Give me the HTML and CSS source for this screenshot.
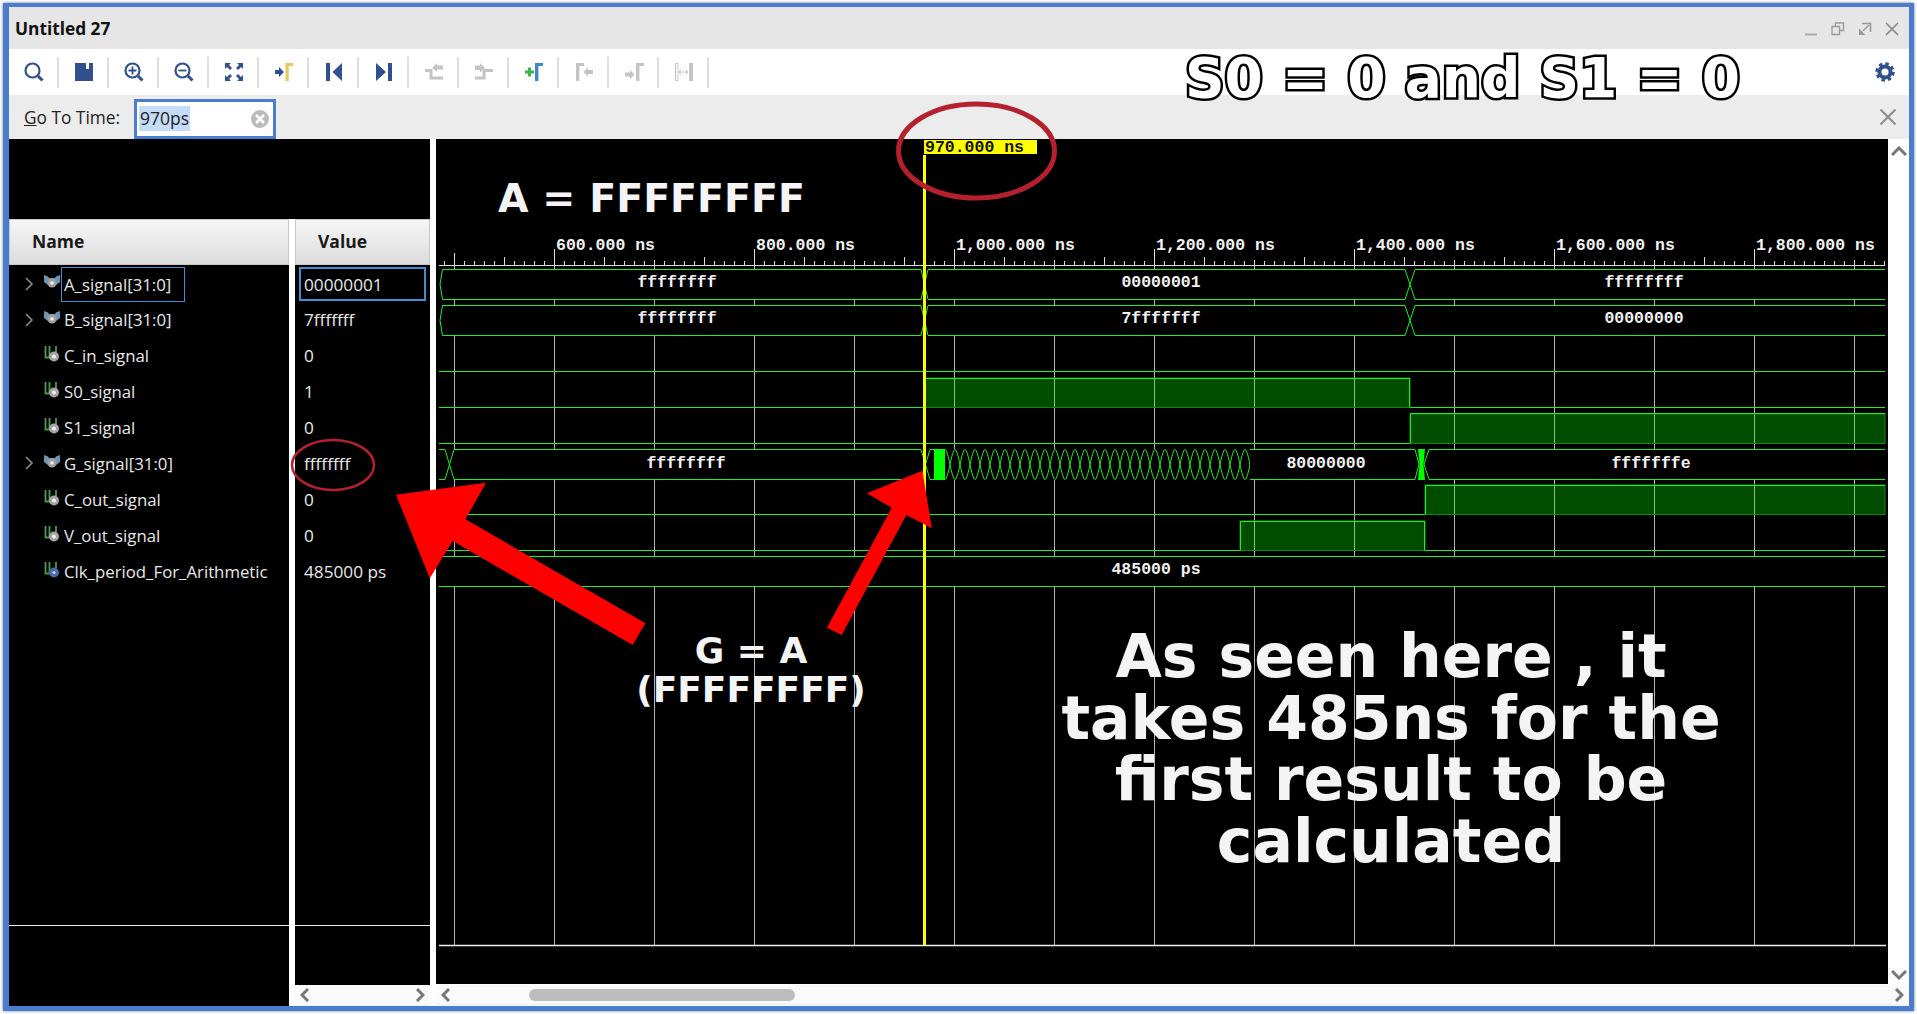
FILE: index.html
```html
<!DOCTYPE html>
<html lang="en">
<head>
    <meta charset="UTF-8">
    <title>Untitled 27</title>
    <link rel="stylesheet" href="styles.css">
</head>
<body>

<svg class="defs" width="0" height="0">
    <symbol id="bus-icon" viewBox="0 0 16 14">
        <path d="M0 0 L4 1.500 L5 3 H11 L12 1.500 L16 0 V7 L12 10 H4 L0 7 Z" fill="#6f93b3"/>
        <circle cx="8" cy="8" r="4.500" fill="#a0a0a0"/>
        <circle cx="8" cy="8" r="1.800" fill="#eee"/>
    </symbol>
    <symbol id="wire-icon" viewBox="0 0 16 16">
        <path d="M1.500 0 V11.500 H5.500 M5.500 11.500 V0 M12 0 V6" fill="none" stroke="#4a9a4a" stroke-width="1.800"/>
        <circle cx="10" cy="10.500" r="5" fill="#a5a5a5"/>
        <circle cx="10" cy="10.500" r="2" fill="#eee"/>
    </symbol>
    <symbol id="clk-icon" viewBox="0 0 16 16">
        <path d="M1.500 0 V11.500 H5.500 M5.500 11.500 V0 M12 0 V6" fill="none" stroke="#4a9a4a" stroke-width="1.800"/>
        <circle cx="10" cy="10.500" r="5" fill="#4c6aa8"/>
        <circle cx="10" cy="10.500" r="1.500" fill="#cdd8ee"/>
    </symbol>
    <symbol id="gamma-icon" viewBox="0 0 8 18">
        <path d="M0 0 H8 V3 H3.400 V18 H0 Z"/>
    </symbol>
    <symbol id="expander-icon" viewBox="0 0 10 14">
        <path d="M2 1 L8 7 L2 13" fill="none" stroke="#8a8a8a" stroke-width="1.600"/>
    </symbol>
    <symbol id="chevron-left" viewBox="0 0 10 14">
        <path d="M8 1 L2 7 L8 13" fill="none" stroke="#777" stroke-width="3"/>
    </symbol>
    <symbol id="chevron-right" viewBox="0 0 10 14">
        <path d="M2 1 L8 7 L2 13" fill="none" stroke="#777" stroke-width="3"/>
    </symbol>
    <symbol id="chevron-up" viewBox="0 0 16 10">
        <path d="M1 9 L8 2 L15 9" fill="none" stroke="#777" stroke-width="3"/>
    </symbol>
    <symbol id="chevron-down" viewBox="0 0 16 10">
        <path d="M1 1 L8 8 L15 1" fill="none" stroke="#777" stroke-width="3"/>
    </symbol>
</svg>

<div class="window">
    <div class="titlebar">
        <span class="title">Untitled 27</span>
        <div class="window-controls">
            <svg class="control" width="14" height="14" viewBox="0 0 14 14"><path d="M1 12.500 H13" stroke="#aaa" stroke-width="2"/></svg>
            <svg class="control" width="14" height="14" viewBox="0 0 14 14"><path d="M4.500 4 V1 H12.500 V8.500 H9 M1 4.500 H8.500 V12.500 H1 Z" fill="none" stroke="#999" stroke-width="1.300"/></svg>
            <svg class="control" width="14" height="14" viewBox="0 0 14 14"><path d="M4 1.500 H12.500 V10" fill="none" stroke="#999" stroke-width="1.500"/><path d="M1 13 V6.500 L7.500 13 Z" fill="#999"/><path d="M5 9 L11 3" stroke="#999" stroke-width="1.500"/></svg>
            <svg class="control" width="14" height="14" viewBox="0 0 14 14"><path d="M1 1 L13 13 M13 1 L1 13" stroke="#888" stroke-width="1.700"/></svg>
        </div>
    </div>

    <div class="toolbar">
        <div class="tool"><svg width="24" height="24" viewBox="0 0 24 24"><circle cx="10.500" cy="10.500" r="7" fill="none" stroke="#30508e" stroke-width="2.200"/><path d="M16 16 L20.500 20.500" stroke="#30508e" stroke-width="3"/></svg></div>
        <div class="tool"><svg width="24" height="24" viewBox="0 0 24 24"><path d="M3 3 H21 V21 H3 Z" fill="#30508e"/><path d="M14 3 H17 V9 H14 Z" fill="#fff"/></svg></div>
        <div class="tool"><svg width="24" height="24" viewBox="0 0 24 24"><circle cx="10.500" cy="10.500" r="7" fill="none" stroke="#30508e" stroke-width="2.200"/><path d="M16 16 L20.500 20.500" stroke="#30508e" stroke-width="3"/><path d="M6.500 10.500 H14.500 M10.500 6.500 V14.500" stroke="#30508e" stroke-width="1.800"/></svg></div>
        <div class="tool"><svg width="24" height="24" viewBox="0 0 24 24"><circle cx="10.500" cy="10.500" r="7" fill="none" stroke="#30508e" stroke-width="2.200"/><path d="M16 16 L20.500 20.500" stroke="#30508e" stroke-width="3"/><path d="M6.500 10.500 H14.500" stroke="#30508e" stroke-width="1.800"/></svg></div>
        <div class="tool"><svg width="24" height="24" viewBox="0 0 24 24" fill="#30508e"><path d="M3 3 H9 L7 5 L10 8 L8 10 L5 7 L3 9 Z M21 3 V9 L19 7 L16 10 L14 8 L17 5 L15 3 Z M3 21 V15 L5 17 L8 14 L10 16 L7 19 L9 21 Z M21 21 H15 L17 19 L14 16 L16 14 L19 17 L21 15 Z"/></svg></div>
        <div class="tool"><svg width="24" height="24" viewBox="0 0 24 24"><path d="M3 10 H7 V7 L12 12 L7 17 V14 H3 Z" fill="#30508e"/><use href="#gamma-icon" x="13.300" y="3" width="8" height="18" fill="#e8c860"/></svg></div>
        <div class="tool"><svg width="24" height="24" viewBox="0 0 24 24" fill="#30508e"><path d="M4 3 H8 V21 H4 Z M20 3 V21 L10.500 12 Z"/></svg></div>
        <div class="tool"><svg width="24" height="24" viewBox="0 0 24 24" fill="#30508e"><path d="M4 3 V21 L14 12 Z M16 3 H20 V21 H16 Z"/></svg></div>
        <div class="tool"><svg width="24" height="24" viewBox="0 0 24 24"><path d="M3 10.500 H9 V18 H21" fill="none" stroke="#c4c4c4" stroke-width="3"/><path d="M21 5.500 H15 V3 L10 8 L15 12 V9.500 H21 Z" fill="#c4c4c4"/></svg></div>
        <div class="tool"><svg width="24" height="24" viewBox="0 0 24 24"><path d="M3 18 H12 V10.500 H21" fill="none" stroke="#c4c4c4" stroke-width="3"/><path d="M3 5.500 H8 V3 L13 8 L8 12.500 V10 H3 Z" fill="#c4c4c4"/></svg></div>
        <div class="tool"><svg width="24" height="24" viewBox="0 0 24 24"><path d="M3 12 H12 M7.500 7.500 V16.500" stroke="#3ab54a" stroke-width="3"/><use href="#gamma-icon" x="13" y="3" width="8" height="18" fill="#3a8ac4"/></svg></div>
        <div class="tool"><svg width="24" height="24" viewBox="0 0 24 24"><use href="#gamma-icon" x="4" y="3" width="8" height="18" fill="#c4c4c4"/><path d="M21 10 H16 V7.500 L11.500 12 L16 16.500 V14 H21 Z" fill="#c4c4c4"/></svg></div>
        <div class="tool"><svg width="24" height="24" viewBox="0 0 24 24"><path d="M3 12.500 H8 V10 L12.500 14.500 L8 19 V16.500 H3 Z" fill="#c4c4c4"/><use href="#gamma-icon" x="14" y="3" width="8" height="18" fill="#c4c4c4"/></svg></div>
        <div class="tool"><svg width="24" height="24" viewBox="0 0 24 24"><path d="M3.500 3.500 H6 V20.500 H3.500 Z" fill="none" stroke="#c4c4c4"/><path d="M17 3 H21 V21 H17 Z" fill="#c4c4c4"/><path d="M7 12 H16 M9 10 L7 12 L9 14 M14 10 L16 12 L14 14" fill="none" stroke="#c4c4c4"/></svg></div>
        <svg class="gear" width="24" height="24" viewBox="0 0 24 24">
            <circle cx="12" cy="12" r="8" fill="none" stroke="#30508e" stroke-width="3.400" stroke-dasharray="3.300 3"/>
            <circle cx="12" cy="12" r="5.600" fill="none" stroke="#30508e" stroke-width="4"/>
        </svg>
    </div>

    <div class="gotobar">
        <label class="goto-label"><u>G</u>o To Time:</label>
        <div class="goto-input">
            <span class="selected">970ps</span>
            <svg class="clear" width="20" height="20" viewBox="0 0 20 20"><circle cx="10" cy="10" r="9" fill="#bbb"/><path d="M6 6 L14 14 M14 6 L6 14" stroke="#fff" stroke-width="2.500"/></svg>
        </div>
        <svg class="goto-close" width="18" height="18" viewBox="0 0 18 18"><path d="M1.500 1.500 L16.500 16.500 M16.500 1.500 L1.500 16.500" stroke="#8c8c8c" stroke-width="2"/></svg>
    </div>

    <div class="panes">
        <div class="signals">
            <div class="signals-top"></div>
            <div class="columns">
                <div class="col col-name">
                    <div class="col-head head-name">Name</div>
                    <div class="rows">
                        <div class="row"><svg class="expander" width="10" height="14"><use href="#expander-icon"/></svg><svg class="sig-icon" width="16" height="14"><use href="#bus-icon"/></svg><span class="sig-name focused">A_signal[31:0]</span></div>
                        <div class="row"><svg class="expander" width="10" height="14"><use href="#expander-icon"/></svg><svg class="sig-icon" width="16" height="14"><use href="#bus-icon"/></svg><span class="sig-name">B_signal[31:0]</span></div>
                        <div class="row leaf"><svg class="sig-icon" width="16" height="16"><use href="#wire-icon"/></svg><span class="sig-name">C_in_signal</span></div>
                        <div class="row leaf"><svg class="sig-icon" width="16" height="16"><use href="#wire-icon"/></svg><span class="sig-name">S0_signal</span></div>
                        <div class="row leaf"><svg class="sig-icon" width="16" height="16"><use href="#wire-icon"/></svg><span class="sig-name">S1_signal</span></div>
                        <div class="row"><svg class="expander" width="10" height="14"><use href="#expander-icon"/></svg><svg class="sig-icon" width="16" height="14"><use href="#bus-icon"/></svg><span class="sig-name">G_signal[31:0]</span></div>
                        <div class="row leaf"><svg class="sig-icon" width="16" height="16"><use href="#wire-icon"/></svg><span class="sig-name">C_out_signal</span></div>
                        <div class="row leaf"><svg class="sig-icon" width="16" height="16"><use href="#wire-icon"/></svg><span class="sig-name">V_out_signal</span></div>
                        <div class="row leaf"><svg class="sig-icon" width="16" height="16"><use href="#clk-icon"/></svg><span class="sig-name">Clk_period_For_Arithmetic</span></div>
                    </div>
                    <div class="foot foot-name"></div>
                </div>
                <div class="col col-value">
                    <div class="col-head head-value">Value</div>
                    <div class="rows">
                        <div class="row value"><span class="value-box">00000001</span></div>
                        <div class="row value">7fffffff</div>
                        <div class="row value">0</div>
                        <div class="row value">1</div>
                        <div class="row value">0</div>
                        <div class="row value">ffffffff</div>
                        <div class="row value">0</div>
                        <div class="row value">0</div>
                        <div class="row value">485000 ps</div>
                    </div>
                    <div class="foot foot-value"></div>
                    <div class="hscroll">
                        <svg width="10" height="14"><use href="#chevron-left"/></svg>
                        <svg width="10" height="14"><use href="#chevron-right"/></svg>
                    </div>
                </div>
            </div>
        </div>

        <div class="waves">
            <div class="waves-main">
                <svg class="canvas" width="1452" height="845" viewBox="436 139 1452 845">
                    <defs>
                        <pattern id="minor-ticks" patternUnits="userSpaceOnUse" x="444" y="261" width="10" height="4">
                            <path d="M0.500 0 V4" stroke="#ddd"/>
                        </pattern>
                        <pattern id="toggling" patternUnits="userSpaceOnUse" x="945" y="449" width="20" height="31">
                            <path d="M0 0.500 C1.500 0.500 3.500 8 5 15.500 C6.500 23 8.500 30.500 10 30.500 C11.500 30.500 13.500 23 15 15.500 C16.500 8 18.500 0.500 20 0.500" fill="none" stroke="#20f020"/>
                            <path d="M0 30.500 C1.500 30.500 3.500 23 5 15.500 C6.500 8 8.500 0.500 10 0.500 C11.500 0.500 13.500 8 15 15.500 C16.500 23 18.500 30.500 20 30.500" fill="none" stroke="#20f020"/>
                        </pattern>
                    </defs>

                    <!-- ruler -->
                    <text class="ruler-label" x="556" y="250">600.000 ns</text>
                    <text class="ruler-label" x="756" y="250">800.000 ns</text>
                    <text class="ruler-label" x="956" y="250">1,000.000 ns</text>
                    <text class="ruler-label" x="1156" y="250">1,200.000 ns</text>
                    <text class="ruler-label" x="1356" y="250">1,400.000 ns</text>
                    <text class="ruler-label" x="1556" y="250">1,600.000 ns</text>
                    <text class="ruler-label" x="1756" y="250">1,800.000 ns</text>
                    <rect x="439" y="261" width="1446" height="4" fill="url(#minor-ticks)"/>
                    <path class="tick" d="M454.500 253 V265 M554.500 249 V265 M754.500 249 V265 M954.500 249 V265 M1154.500 249 V265 M1354.500 249 V265 M1554.500 249 V265 M1754.500 249 V265 M504.500 257 V265 M604.500 257 V265 M704.500 257 V265 M804.500 257 V265 M904.500 257 V265 M1004.500 257 V265 M1104.500 257 V265 M1204.500 257 V265 M1304.500 257 V265 M1404.500 257 V265 M1504.500 257 V265 M1704.500 257 V265 M654.500 260 V265 M854.500 260 V265 M1054.500 260 V265 M1254.500 260 V265 M1454.500 260 V265 M1654.500 260 V265 M1854.500 260 V265"/>
                    <path class="tick" d="M439 265.500 H1885"/>

                    <!-- grid -->
                    <path class="grid" d="M454.500 266 V945 M554.500 266 V945 M654.500 266 V945 M754.500 266 V945 M854.500 266 V945 M954.500 266 V945 M1054.500 266 V945 M1154.500 266 V945 M1254.500 266 V945 M1354.500 266 V945 M1454.500 266 V945 M1554.500 266 V945 M1654.500 266 V945 M1754.500 266 V945 M1854.500 266 V945"/>
                    <path class="bottom-line" d="M439 945.500 H1886"/>

                    <!-- A_signal -->
                    <g class="trace">
                        <rect class="bus-bg" x="439" y="269" width="1446" height="31"/>
                        <path d="M440 284.500 L442.500 269.500 H921 L924.500 284.500 L921 299.500 H442.500 Z"/>
                        <path d="M924.500 284.500 L928 269.500 H1405 L1410 284.500 L1405 299.500 H928 Z"/>
                        <path d="M1410 284.500 L1415 269.500 H1885 M1885 299.500 H1415 L1410 284.500"/>
                    </g>
                    <text class="bus-label" x="677" y="287">ffffffff</text>
                    <text class="bus-label" x="1161" y="287">00000001</text>
                    <text class="bus-label" x="1644" y="287">ffffffff</text>

                    <!-- B_signal -->
                    <g class="trace">
                        <rect class="bus-bg" x="439" y="305" width="1446" height="31"/>
                        <path d="M440 320.500 L442.500 305.500 H921 L924.500 320.500 L921 335.500 H442.500 Z"/>
                        <path d="M924.500 320.500 L928 305.500 H1405 L1410 320.500 L1405 335.500 H928 Z"/>
                        <path d="M1410 320.500 L1415 305.500 H1885 M1885 335.500 H1415 L1410 320.500"/>
                    </g>
                    <text class="bus-label" x="677" y="323">ffffffff</text>
                    <text class="bus-label" x="1161" y="323">7fffffff</text>
                    <text class="bus-label" x="1644" y="323">00000000</text>

                    <!-- single bit traces -->
                    <g class="trace">
                        <path d="M439 371.500 H1885 M439 407.500 H1885 M439 443.500 H1885 M439 514.500 H1885 M439 550.500 H1885"/>
                    </g>
                    <rect class="high" x="925" y="378" width="485" height="29.500"/>
                    <rect class="high" x="1410" y="414" width="475" height="29.500"/>
                    <rect class="high" x="1425" y="485" width="460" height="29.500"/>
                    <rect class="high" x="1240" y="521" width="185" height="29.500"/>
                    <g class="trace">
                        <path d="M925 378.500 H1409.500 V407.500 M1410.500 443.500 V413.500 H1885 M1425.500 514.500 V485.500 H1885 M1240.500 550.500 V521.500 H1424.500 V550.500"/>
                    </g>

                    <!-- G_signal -->
                    <rect class="bus-bg" x="439" y="449" width="1446" height="31"/>
                    <g class="trace">
                        <path d="M439 449.500 H445 L454 479.500 H921 L930 449.500 H934 M439 479.500 H445 L454 449.500 H921 L930 479.500 H934"/>
                        <path d="M1250 449.500 H1415 L1419 464 M1250 479.500 H1415 L1419 464"/>
                        <path d="M1424 464 L1429 449.500 H1885 M1424 464 L1429 479.500 H1885"/>
                    </g>
                    <rect x="945" y="449" width="305" height="31" fill="url(#toggling)"/>
                    <path class="solid" d="M934 449 H945 V480 H934 Z M1418 449 H1425 L1423.500 464.500 L1425 480 H1418 L1419.500 464.500 Z"/>
                    <text class="bus-label" x="686" y="468">ffffffff</text>
                    <text class="bus-label" x="1326" y="468">80000000</text>
                    <text class="bus-label" x="1651" y="468">fffffffe</text>

                    <!-- Clk_period -->
                    <rect class="bus-bg" x="439" y="556" width="1446" height="31"/>
                    <g class="trace">
                        <path d="M439 556.500 H1885 M439 586.500 H1885"/>
                    </g>
                    <text class="bus-label" x="1156" y="574">485000 ps</text>

                    <!-- cursor -->
                    <rect class="cursor" x="923" y="155" width="3" height="790"/>
                    <rect class="cursor" x="924" y="140" width="113" height="14"/>
                    <text class="cursor-label" x="925" y="152">970.000 ns</text>
                </svg>
                <div class="vscroll">
                    <svg width="16" height="10"><use href="#chevron-up"/></svg>
                    <svg width="16" height="10"><use href="#chevron-down"/></svg>
                </div>
            </div>
            <div class="hscroll wave-hscroll">
                <svg width="10" height="14"><use href="#chevron-left"/></svg>
                <div class="thumb"></div>
                <svg width="10" height="14"><use href="#chevron-right"/></svg>
            </div>
        </div>
    </div>
</div>

<!-- notes drawn over the screenshot -->
<svg class="notes" width="1917" height="1014" viewBox="0 0 1917 1014">
    <ellipse class="ring ring-big" cx="976.500" cy="151" rx="78" ry="47"/>
    <ellipse class="ring ring-small" cx="333" cy="465" rx="41" ry="25"/>
    <path class="arrow" d="M396 494.700 L486 482.700 L465.400 519.300 L645.400 623.300 L632.600 645 L452.700 541 L429.800 578.300 Z"/>
    <path class="arrow" d="M922.400 470.700 L931.800 528.300 L906.400 515 L841.600 635 L827 627.700 L891.800 507.700 L867 493.300 Z"/>
    <text class="note-title" x="1185" y="97">S0 = 0 and S1 = 0</text>
    <text class="note-a" x="498" y="212">A = FFFFFFFF</text>
</svg>
<div class="note-g">G = A<br>(FFFFFFFF)</div>
<div class="note-big">As seen here , it<br>takes 485ns for the<br>first result to be<br>calculated</div>

</body>
</html>
```

FILE: styles.css
```css
html, body {
    margin: 0;
    padding: 0;
    height: 100%;
    overflow: hidden;
}
body {
    background: #fff;
    font-family: "Open Sans", "Noto Sans", sans-serif;
    position: relative;
}
.defs {
    position: absolute;
}
.window {
    box-sizing: border-box;
    display: flex;
    flex-direction: column;
    width: 1911px;
    height: 1008px;
    margin: 3px 3px 0 3px;
    background: #fff;
    border-style: solid;
    border-color: #4a7dcf;
    border-width: 4px 5px 5px 6px;
    box-shadow: 0 0 3px #777;
}

.titlebar {
    display: flex;
    flex: none;
    align-items: center;
    justify-content: space-between;
    height: 42px;
    background: #e6e6e6;
}
.title {
    margin-left: 6px;
    font-size: 17.300px;
    font-weight: 700;
    color: #111;
}
.window-controls {
    display: flex;
    gap: 13px;
    margin-right: 10px;
    margin-top: 2px;
}

.toolbar {
    display: flex;
    flex: none;
    align-items: center;
    position: relative;
    height: 46px;
    background: #fff;
}
.tool {
    box-sizing: border-box;
    display: flex;
    align-items: center;
    justify-content: center;
    width: 50px;
    height: 31px;
    padding-left: 1px;
    border-right: 2px solid #ddd;
}
.gear {
    position: absolute;
    right: 12px;
    top: 11px;
}

.gotobar {
    display: flex;
    flex: none;
    align-items: center;
    height: 44px;
    background: #ececec;
}
.goto-label {
    margin-left: 15px;
    width: 110px;
    font-size: 17.300px;
    color: #222;
}
.goto-input {
    box-sizing: border-box;
    display: flex;
    align-items: center;
    justify-content: space-between;
    width: 142px;
    height: 40px;
    margin-top: 3px;
    padding: 0 3px 0 2px;
    background: #fff;
    border: 3px solid #4a7dcf;
}
.selected {
    padding: 0 1px;
    font-size: 17.500px;
    line-height: 25px;
    background: #c5dcf8;
    color: #222;
}
.goto-close {
    margin-left: auto;
    margin-right: 12px;
}

.panes {
    display: flex;
    flex: 1;
    gap: 6px;
    min-height: 0;
}
.signals {
    display: flex;
    flex: none;
    flex-direction: column;
    width: 421px;
}
.signals-top {
    flex: none;
    height: 80px;
    background: #000;
}
.columns {
    display: flex;
    flex: 1;
    gap: 6px;
    min-height: 0;
}
.col {
    display: flex;
    flex-direction: column;
}
.col-name {
    width: 280px;
    background: #000;
}
.col-value {
    width: 135px;
}
.col-head {
    box-sizing: border-box;
    flex: none;
    height: 46px;
    line-height: 43px;
    font-size: 17.500px;
    font-weight: 700;
    color: #1a1a1a;
    background: linear-gradient(#f6f6f6, #dcdcdc);
    border: 1px solid #c8c8c8;
}
.head-name {
    padding-left: 22px;
}
.head-value {
    padding-left: 22px;
}
.rows {
    flex: 1;
    padding-top: 1px;
    background: #000;
}
.row {
    box-sizing: border-box;
    display: flex;
    align-items: center;
    height: 35.900px;
    padding-left: 15px;
    font-size: 16.800px;
    color: #e8e8e8;
    white-space: nowrap;
}
.row.leaf {
    padding-left: 35px;
}
.expander {
    flex: none;
    margin-right: 10px;
}
.sig-icon {
    flex: none;
    margin-top: -3px;
    margin-right: 4px;
}
.focused {
    box-sizing: border-box;
    display: flex;
    align-items: center;
    width: 124px;
    height: 35px;
    margin-left: -3px;
    margin-top: 1px;
    padding-left: 2px;
    border: 1px solid #3f8fd0;
}
.row.value {
    padding-left: 9px;
    font-size: 17.200px;
}
.value-box {
    display: flex;
    align-items: center;
    box-sizing: border-box;
    width: 127px;
    height: 34px;
    margin-left: -5px;
    margin-top: 1px;
    padding-left: 3px;
    border: 2px solid #3f8fd0;
}
.foot {
    flex: none;
    box-sizing: border-box;
    background: #000;
    border-top: 1px solid #eee;
}
.foot-name {
    height: 81px;
}
.foot-value {
    height: 60px;
}

.hscroll {
    display: flex;
    flex: none;
    align-items: center;
    justify-content: space-between;
    box-sizing: border-box;
    height: 21px;
    padding: 0 5px;
    background: #fafafa;
    border-bottom: 1px solid #eee;
}
.waves {
    display: flex;
    flex: 1;
    flex-direction: column;
    min-width: 0;
}
.waves-main {
    display: flex;
    flex: none;
    height: 845px;
}
.canvas {
    display: block;
    flex: none;
    background: #000;
}
.vscroll {
    display: flex;
    flex: 1;
    flex-direction: column;
    align-items: center;
    justify-content: space-between;
    padding: 7px 0 4px;
}
.wave-hscroll {
    margin-top: 1px;
    height: 20px;
}
.thumb {
    width: 266px;
    height: 12px;
    margin-right: auto;
    margin-left: 78px;
    border-radius: 6px;
    background: #bdbdbd;
}

.ruler-label, .bus-label, .cursor-label {
    font-family: "Liberation Mono", "DejaVu Sans Mono", monospace;
    font-size: 16.500px;
    font-weight: 700;
}
.ruler-label, .bus-label {
    fill: #f2f2f2;
}
.bus-label {
    text-anchor: middle;
}
.cursor-label {
    fill: #111;
}
.tick {
    fill: none;
    stroke: #ddd;
}
.grid {
    fill: none;
    stroke: #b4b4b4;
}
.bottom-line {
    fill: none;
    stroke: #eee;
    stroke-width: 1.500;
}
.trace path {
    fill: none;
    stroke: #20f020;
}
.bus-bg {
    fill: #000;
}
.high {
    fill: rgba(0, 255, 0, 0.3);
    stroke: #0a8a0a;
}
.solid {
    fill: #00ff00;
}
.cursor {
    fill: #ffff00;
}

.notes {
    position: absolute;
    top: 0;
    left: 0;
    pointer-events: none;
}
.ring {
    fill: none;
    stroke: #b5202e;
}
.ring-big {
    stroke-width: 5;
}
.ring-small {
    stroke-width: 2.500;
}
.arrow {
    fill: #ff0000;
}
.note-title {
    font-family: "DejaVu Sans", sans-serif;
    font-size: 55px;
    font-weight: 700;
    fill: #fff;
    stroke: #000;
    stroke-width: 5px;
    paint-order: stroke;
}
.note-a, .note-g, .note-big {
    font-family: "DejaVu Sans", sans-serif;
    font-weight: 700;
}
.note-a {
    font-size: 39.500px;
    fill: #f4f4f4;
}
.note-g, .note-big {
    position: absolute;
    text-align: center;
    white-space: nowrap;
    color: #f4f4f4;
}
.note-g {
    left: 551px;
    top: 631px;
    width: 400px;
    font-size: 36px;
    line-height: 39px;
}
.note-big {
    left: 991px;
    top: 626px;
    width: 800px;
    font-size: 60px;
    line-height: 61.500px;
}
```
